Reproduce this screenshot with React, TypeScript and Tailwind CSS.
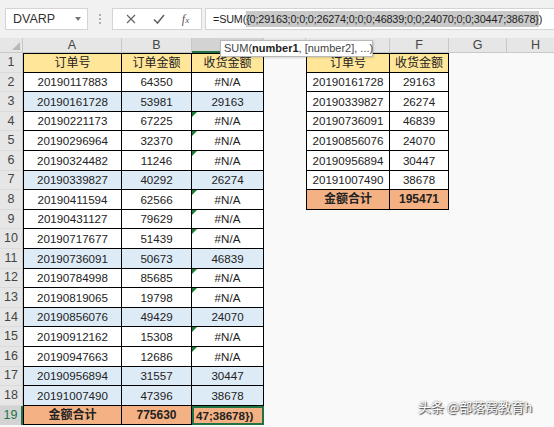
import React from 'react';

type Row = { a: string; b: string; c: string; blue?: boolean; tri?: boolean };

const leftRows: Row[] = [
  { a: '20190117883', b: '64350', c: '#N/A' },
  { a: '20190161728', b: '53981', c: '29163', blue: true },
  { a: '20190221173', b: '67225', c: '#N/A', tri: true },
  { a: '20190296964', b: '32370', c: '#N/A', tri: true },
  { a: '20190324482', b: '11246', c: '#N/A', tri: true },
  { a: '20190339827', b: '40292', c: '26274', blue: true },
  { a: '20190411594', b: '62566', c: '#N/A', tri: true },
  { a: '20190431127', b: '79629', c: '#N/A', tri: true },
  { a: '20190717677', b: '51439', c: '#N/A', tri: true },
  { a: '20190736091', b: '50673', c: '46839', blue: true },
  { a: '20190784998', b: '85685', c: '#N/A', tri: true },
  { a: '20190819065', b: '19798', c: '#N/A', tri: true },
  { a: '20190856076', b: '49429', c: '24070', blue: true },
  { a: '20190912162', b: '15308', c: '#N/A', tri: true },
  { a: '20190947663', b: '12686', c: '#N/A', tri: true },
  { a: '20190956894', b: '31557', c: '30447', blue: true },
  { a: '20191007490', b: '47396', c: '38678', blue: true },
];

const rightRows = [
  ['20190161728', '29163'],
  ['20190339827', '26274'],
  ['20190736091', '46839'],
  ['20190856076', '24070'],
  ['20190956894', '30447'],
  ['20191007490', '38678'],
];

const font = { fontFamily: '"Liberation Sans", "Noto Sans CJK SC", Arial, sans-serif' };

const Triangle = () => (
  <span className="absolute left-0 top-0 w-0 h-0 border-t-[5px] border-r-[5px] border-t-[#1e7b34] border-r-transparent" />
);

const cellBase = 'relative flex items-center justify-center text-[11.6px] text-[#222] border-b border-r border-black';

export default function App() {
  // C, D, E letters sit under the function tooltip
  const headers = ['A', 'B', 'C', 'D', 'E', 'F', 'G', 'H'];
  const hidden = ['C', 'D', 'E'];

  return (
    <div className="w-[554px] h-[427px] overflow-hidden relative bg-[#f9f9f9] select-none" style={font}>
      {/* Formula bar */}
      <div className="h-[38px] bg-[#f1f1f1] flex items-start pt-[8px] pl-[5px] gap-0">
        <div className="w-[83px] h-[22px] bg-white border border-[#d4d4d4] flex items-center justify-between pl-[7px] pr-[6px]">
          <span className="text-[12.5px] text-[#333]">DVARP</span>
          <span className="w-0 h-0 border-l-[3.5px] border-r-[3.5px] border-t-[4px] border-l-transparent border-r-transparent border-t-[#777]" />
        </div>
        <div className="w-[24px] h-[22px] flex flex-col items-center justify-center gap-[2px]">
          <span className="w-[2px] h-[2px] bg-[#b0b0b0]" />
          <span className="w-[2px] h-[2px] bg-[#b0b0b0]" />
          <span className="w-[2px] h-[2px] bg-[#b0b0b0]" />
        </div>
        <div className="w-[90px] h-[22px] bg-white border border-[#d4d4d4] flex items-center justify-around px-[4px] text-[#666]">
          <svg width="12" height="12" viewBox="0 0 12 12">
            <path d="M2 2 L10 10 M10 2 L2 10" stroke="#666" strokeWidth="1.2" fill="none" />
          </svg>
          <svg width="14" height="12" viewBox="0 0 14 12">
            <path d="M2 6.5 L5.5 10 L12 2" stroke="#666" strokeWidth="1.6" fill="none" />
          </svg>
          <span className="text-[12px] italic text-[#555]" style={{ fontFamily: '"Liberation Serif", serif' }}>
            f<span className="text-[9px]">x</span>
          </span>
        </div>
        <div className="ml-[3px] flex-1 h-[22px] bg-white border border-[#d4d4d4] border-r-0 flex items-center pl-[7px] text-[10.8px] tracking-[-0.15px] text-[#222] whitespace-nowrap overflow-hidden">
          <span>=SUM(</span>
          <span className="bg-[#c9c9c9]">{'{0;29163;0;0;0;26274;0;0;0;46839;0;0;24070;0;0;30447;38678}'}</span>
          <span>)</span>
        </div>
      </div>

      {/* Sheet grid */}
      <div className="grid grid-cols-[23px_99px_70px_72px_42px_84px_59px_58px_58px] grid-rows-[15px_repeat(19,19.6px)]">
        {/* Column headers */}
        <div className="relative bg-[#e6e6e6] border-r border-b border-[#c8c8c8]">
          <span className="absolute right-[2px] bottom-[2px] w-0 h-0 border-b-[8px] border-l-[8px] border-b-[#b8b8b8] border-l-transparent" />
        </div>
        {headers.map((h) => (
          <div
            key={h}
            className={
              h === 'C'
                ? 'bg-[#d3d3d3] border-r border-[#c8c8c8] border-b-2 border-b-[#217346] flex items-center justify-center text-[12.5px] text-[#217346]'
                : 'bg-[#e6e6e6] border-r border-b border-[#c8c8c8] flex items-center justify-center text-[12.5px] text-[#444]'
            }
          >
            {hidden.includes(h) ? null : h}
          </div>
        ))}

        {/* Row 1 .. 19 */}
        {Array.from({ length: 19 }).map((_, i) => {
          const n = i + 1;
          const isTotal = n === 19;
          const lr = n >= 2 && n <= 18 ? leftRows[n - 2] : null;
          const rowBg = lr?.blue ? 'bg-[#ddebf7]' : 'bg-white';
          const topB = n === 1 ? ' border-t' : '';

          // left table cells
          let aCell, bCell, cCell;
          if (n === 1) {
            aCell = <div className={`${cellBase} border-l bg-[#ffe699] text-[12px]${topB}`}>订单号</div>;
            bCell = <div className={`${cellBase} bg-[#ffe699] text-[12px]${topB}`}>订单金额</div>;
            cCell = <div className={`${cellBase} bg-[#ffe699] text-[12px]${topB}`}>收货金额</div>;
          } else if (isTotal) {
            aCell = <div className={`${cellBase} border-l bg-[#f4b183] font-bold text-[12px]`}>金额合计</div>;
            bCell = <div className={`${cellBase} bg-[#f4b183] font-bold text-[12px]`}>775630</div>;
            cCell = (
              <div className="relative flex items-center justify-start pl-[2px] bg-[#f4b183] border-2 border-[#217346] text-[11.6px] font-bold text-[#222] whitespace-nowrap overflow-hidden">
                {'47;38678})'}
              </div>
            );
          } else if (lr) {
            aCell = <div className={`${cellBase} border-l ${rowBg}`}>{lr.a}</div>;
            bCell = <div className={`${cellBase} ${rowBg}`}>{lr.b}</div>;
            cCell = (
              <div className={`${cellBase} ${rowBg}`}>
                {lr.tri && <Triangle />}
                {lr.c}
              </div>
            );
          }

          // right table cells
          let eCell = <div />;
          let fCell = <div />;
          if (n === 1) {
            eCell = <div className={`${cellBase} border-l border-t bg-[#ffe699] text-[12px]`}>订单号</div>;
            fCell = <div className={`${cellBase} border-t bg-[#ffe699] text-[12px]`}>收货金额</div>;
          } else if (n >= 2 && n <= 7) {
            eCell = <div className={`${cellBase} border-l bg-white`}>{rightRows[n - 2][0]}</div>;
            fCell = <div className={`${cellBase} bg-white`}>{rightRows[n - 2][1]}</div>;
          } else if (n === 8) {
            eCell = <div className={`${cellBase} border-l bg-[#f4b183] font-bold text-[12px]`}>金额合计</div>;
            fCell = <div className={`${cellBase} bg-[#f4b183] font-bold text-[12px]`}>195471</div>;
          }

          return (
            <React.Fragment key={n}>
              <div
                className={
                  isTotal
                    ? 'bg-[#d3d3d3] border-r-2 border-r-[#217346] flex items-center justify-center text-[12.5px] text-[#217346]'
                    : 'bg-[#e6e6e6] border-r border-b border-[#c8c8c8] border-b-[#dadada] flex items-center justify-center text-[12.5px] text-[#444]'
                }
              >
                {n}
              </div>
              {aCell}
              {bCell}
              {cCell}
              <div />
              {eCell}
              {fCell}
              <div />
              <div />
            </React.Fragment>
          );
        })}
      </div>

      {/* Function tooltip */}
      <div className="absolute left-[220px] top-[40px] w-[153px] h-[17px] px-[3px] bg-white border border-[#b8b8b8] flex items-center text-[11px] text-[#444] whitespace-nowrap shadow-[1px_1px_2px_rgba(0,0,0,0.15)]">
        SUM(<b className="text-[#222]">number1</b>, [number2], ...)
      </div>

      {/* Watermark */}
      <div
        className="absolute left-[418px] top-[397px] text-[13px] text-white whitespace-nowrap"
        style={{ fontFamily: '"Noto Sans CJK SC", sans-serif', textShadow: '0 0 2px #555, 1px 1px 1px #444' }}
      >
        头条 @部落窝教育h
      </div>
    </div>
  );
}
